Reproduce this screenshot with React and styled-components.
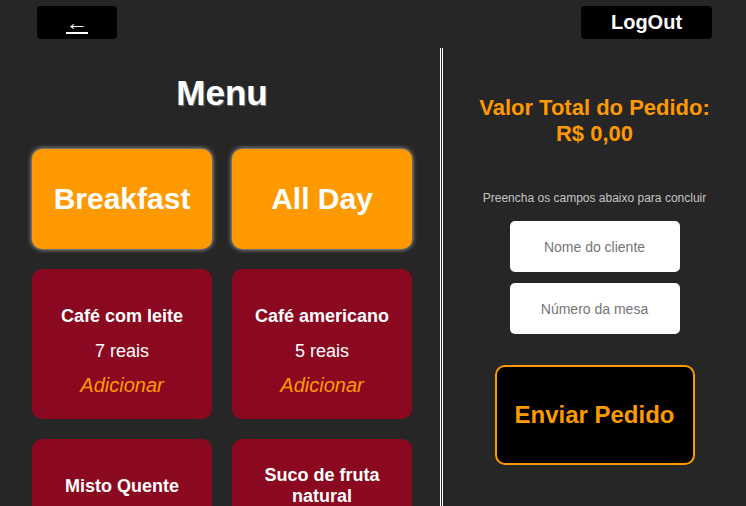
import React from "react"
import styled, { createGlobalStyle } from "styled-components"

const GlobalStyle = createGlobalStyle`
body{
  margin:0;
  background:#262626;
  font-family:"Liberation Sans", Arial, sans-serif;
}
`

const products = [
  { name: "Café com leite", price: 7 },
  { name: "Café americano", price: 5 },
  { name: "Misto Quente", price: 10 },
  { name: "Suco de fruta natural", price: 7 },
]

const App = () => {
  return (
    <>
      <GlobalStyle />
      <Page>
        <Header>
          <BackButton>
            <BackLink href="#">←</BackLink>
          </BackButton>
          <LogOut>LogOut</LogOut>
        </Header>
        <Main>
          <Left>
            <Title>Menu</Title>
            <Grid>
              <Category>Breakfast</Category>
              <Category>All Day</Category>
              {products.map((p) => (
                <Card key={p.name}>
                  <Name>{p.name}</Name>
                  <Price>{p.price} reais</Price>
                  <Add>Adicionar</Add>
                </Card>
              ))}
            </Grid>
          </Left>
          <Right>
            <Total>
              Valor Total do Pedido:
              <br />
              R$ 0,00
            </Total>
            <Hint>Preencha os campos abaixo para concluir</Hint>
            <Input placeholder="Nome do cliente" />
            <Input placeholder="Número da mesa" />
            <Send>Enviar Pedido</Send>
          </Right>
        </Main>
      </Page>
    </>
  )
}
export default App

const Page = styled.div`
min-height:100vh;
`
const Header = styled.div`
display:flex;
justify-content:space-between;
align-items:flex-start;
padding:6px 34px 9px 37px;
height:33px;
`
const BackButton = styled.div`
width:80px;
height:33px;
background:#000;
border-radius:4px;
display:flex;
justify-content:center;
align-items:center;
`
const BackLink = styled.a`
color:#fff;
font-size:22px;
line-height:22px;
text-decoration:underline;
`
const LogOut = styled.div`
width:131px;
height:33px;
background:#000;
border-radius:4px;
color:#fff;
font-size:20px;
font-weight:700;
display:flex;
justify-content:center;
align-items:center;
`
const Main = styled.div`
display:flex;
`
const Left = styled.div`
width:440px;
padding:25px 0 0 4px;
box-sizing:border-box;
display:flex;
flex-direction:column;
align-items:center;
`
const Title = styled.h1`
margin:0 0 36px;
font-size:35px;
font-weight:700;
color:#fff;
text-shadow:1px 1px 1px #7a7a7a;
`
const Grid = styled.div`
display:grid;
grid-template-columns:180px 180px;
grid-auto-rows:150px;
grid-template-rows:100px;
gap:20px;
`
const Category = styled.div`
background:#ff9900;
border-radius:10px;
box-shadow:0 0 5px #cfcfcf;
color:#fff;
font-size:30px;
font-weight:700;
display:flex;
justify-content:center;
align-items:center;
`
const Card = styled.div`
background:#8b0920;
border-radius:10px;
padding:14px 10px 0;
box-sizing:border-box;
display:flex;
flex-direction:column;
justify-content:center;
align-items:center;
text-align:center;
color:#fff;
`
const Name = styled.div`
font-size:18px;
font-weight:700;
line-height:21px;
margin-bottom:14px;
`
const Price = styled.div`
font-size:18px;
line-height:21px;
margin-bottom:12px;
`
const Add = styled.div`
font-size:20px;
font-style:italic;
line-height:23px;
color:#ff9900;
cursor:pointer;
`
const Right = styled.div`
flex:1;
border-left:3px double #fff;
padding-top:47px;
display:flex;
flex-direction:column;
align-items:center;
`
const Total = styled.div`
color:#ff9900;
font-size:22px;
font-weight:700;
text-align:center;
`
const Hint = styled.div`
margin-top:44px;
color:#c4c4c4;
font-size:12px;
`
const Input = styled.input`
width:170px;
height:51px;
box-sizing:border-box;
border:none;
border-radius:5px;
background:#fff;
text-align:center;
font-family:"Liberation Sans", Arial, sans-serif;
font-size:14px;
margin-top:16px;
& + &{
  margin-top:11px;
}
&::placeholder{
  color:#757575;
}
`
const Send = styled.div`
margin-top:31px;
width:200px;
height:100px;
box-sizing:border-box;
background:#000;
border:2px solid #ff9900;
border-radius:10px;
color:#ff9900;
font-size:24px;
font-weight:700;
display:flex;
justify-content:center;
align-items:center;
`
